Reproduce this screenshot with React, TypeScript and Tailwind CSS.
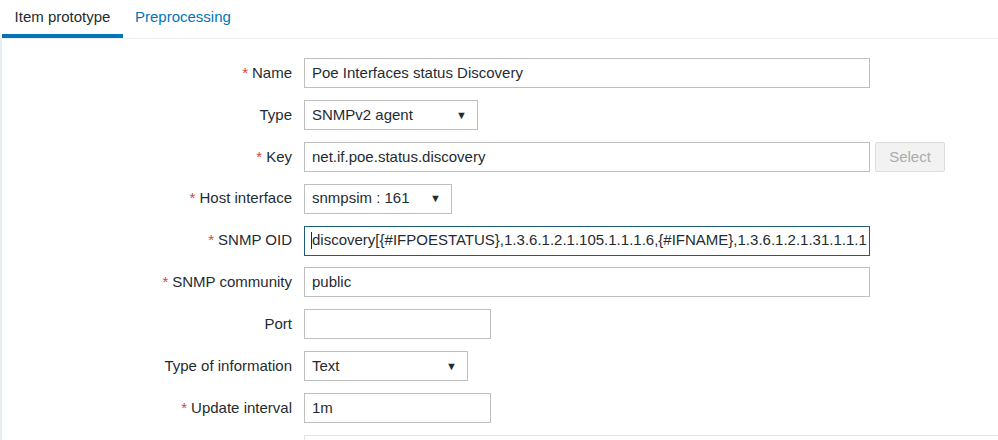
import React from "react";

const font = { fontFamily: '"Liberation Sans", Arial, sans-serif' };

function Label({ text, req }: { text: string; req?: boolean }) {
  return (
    <div className="flex items-center justify-end h-[30px] text-[15px] text-[#1f2c33] whitespace-nowrap">
      {req && <span className="text-[#d64541] mr-[4px]">*</span>}
      {text}
    </div>
  );
}

function Input({ value, w }: { value: string; w: string }) {
  return (
    <div
      className={`h-[30px] ${w} border border-[#bfbfbf] bg-white flex items-center px-[7px] text-[15px] text-[#1f2c33] whitespace-nowrap overflow-hidden`}
    >
      {value}
    </div>
  );
}

function Select({ value, w }: { value: string; w: string }) {
  return (
    <div
      className={`h-[30px] ${w} border border-[#bfbfbf] bg-white flex items-center justify-between pl-[7px] pr-[10px] text-[15px] text-[#1f2c33] whitespace-nowrap`}
    >
      <span>{value}</span>
      <span className="text-[11px] text-[#1f2c33]">▼</span>
    </div>
  );
}

export default function App() {
  return (
    <div style={font} className="w-[998px] h-[440px] bg-white overflow-hidden flex flex-col">
      <div className="flex items-end h-[39px] border-b border-[#ebeef0] pl-[2px]">
        <div className="h-[38px] w-[121px] flex flex-col">
          <div className="flex-1 flex items-center justify-center text-[15px] text-[#1f2c33] pt-[1px]">Item prototype</div>
          <div className="h-[4px] bg-[#0275b8]" />
        </div>
        <div className="h-[38px] flex items-center pl-[12px] pb-[3px] text-[15px] text-[#0275b8]">Preprocessing</div>
      </div>
      <div className="flex-1 border-l-2 border-[#e6eef3] pt-[19px]">
        <div className="grid grid-cols-[290px_1fr] gap-x-[12px] gap-y-[11.9px] items-center">
          <Label text="Name" req />
          <Input value="Poe Interfaces status Discovery" w="w-[566px]" />

          <Label text="Type" />
          <Select value="SNMPv2 agent" w="w-[174px]" />

          <Label text="Key" req />
          <div className="flex items-center gap-[5px]">
            <Input value="net.if.poe.status.discovery" w="w-[566px]" />
            <div className="h-[30px] w-[70px] border border-[#dcdcdc] bg-[#f2f2f2] rounded-[2px] flex items-center justify-center text-[15px] text-[#acacac]">
              Select
            </div>
          </div>

          <Label text="Host interface" req />
          <Select value="snmpsim : 161" w="w-[148px]" />

          <Label text="SNMP OID" req />
          <div className="h-[30px] w-[566px] border border-[#1f5c7a] bg-white flex items-center pl-[6px] text-[15px] text-[#1f2c33] whitespace-nowrap overflow-hidden">
            <span className="inline-block w-px h-[17px] bg-[#1f2c33]" />
            <span>discovery[{"{#IFPOESTATUS}"},1.3.6.1.2.1.105.1.1.1.6,{"{#IFNAME}"},1.3.6.1.2.1.31.1.1.1</span>
          </div>

          <Label text="SNMP community" req />
          <Input value="public" w="w-[566px]" />

          <Label text="Port" />
          <Input value="" w="w-[187px]" />

          <Label text="Type of information" />
          <Select value="Text" w="w-[164px]" />

          <Label text="Update interval" req />
          <Input value="1m" w="w-[187px]" />

          <div />
          <div className="h-[30px] border border-[#e5e5e5] border-r-0" />
        </div>
      </div>
    </div>
  );
}
